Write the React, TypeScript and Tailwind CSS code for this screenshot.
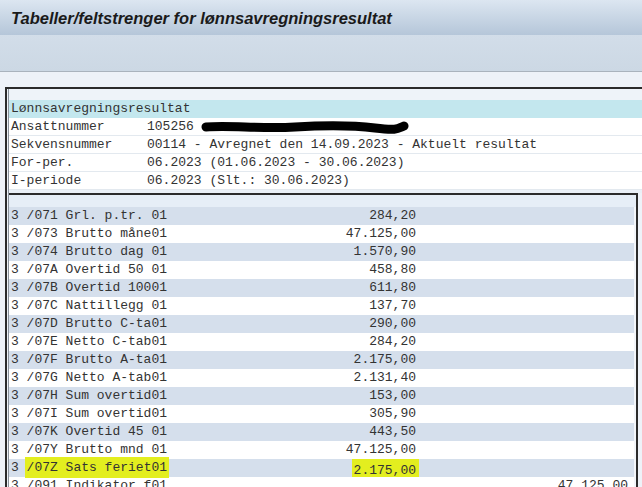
import React from 'react';

type Row = {
  label: string;
  value?: string;
  extra?: string;
  mark?: boolean;
};

const rows: Row[] = [
  { label: '3 /071 Grl. p.tr. 01', value: '284,20' },
  { label: '3 /073 Brutto måne01', value: '47.125,00' },
  { label: '3 /074 Brutto dag 01', value: '1.570,90' },
  { label: '3 /07A Overtid 50 01', value: '458,80' },
  { label: '3 /07B Overtid 10001', value: '611,80' },
  { label: '3 /07C Nattillegg 01', value: '137,70' },
  { label: '3 /07D Brutto C-ta01', value: '290,00' },
  { label: '3 /07E Netto C-tab01', value: '284,20' },
  { label: '3 /07F Brutto A-ta01', value: '2.175,00' },
  { label: '3 /07G Netto A-tab01', value: '2.131,40' },
  { label: '3 /07H Sum overtid01', value: '153,00' },
  { label: '3 /07I Sum overtid01', value: '305,90' },
  { label: '3 /07K Overtid 45 01', value: '443,50' },
  { label: '3 /07Y Brutto mnd 01', value: '47.125,00' },
  { label: '3 /07Z Sats feriet01', value: '2.175,00', mark: true },
  { label: '3 /091 Indikator f01', extra: '47.125,00' },
];

const header = [
  { label: 'Ansattnummer', value: '105256', redacted: true },
  { label: 'Sekvensnummer', value: '00114 - Avregnet den 14.09.2023 - Aktuelt resultat' },
  { label: 'For-per.', value: '06.2023 (01.06.2023 - 30.06.2023)' },
  { label: 'I-periode', value: '06.2023 (Slt.: 30.06.2023)' },
];

function Redacted() {
  return (
    <svg width="212" height="14" viewBox="0 0 212 14" className="ml-[6px] inline-block align-middle">
      <path
        d="M6 7 C 30 5, 60 9, 95 7 S 150 5, 175 8 S 198 8, 204 6"
        stroke="#000"
        strokeWidth="9"
        strokeLinecap="round"
        fill="none"
      />
    </svg>
  );
}

export default function App() {
  return (
    <div
      className="w-[642px] h-[487px] overflow-hidden bg-[#eef2f8] text-[13px] leading-[18px] text-[#333]"
      style={{ fontFamily: '"Liberation Mono", "Courier New", monospace' }}
    >
      <div className="h-[35px] bg-gradient-to-b from-[#dce6f1] to-[#b5c6d9] flex items-center pl-[11px] pt-[1px]">
        <span
          className="text-[16.5px] font-bold italic text-[#1a1a1a] leading-none"
          style={{ fontFamily: '"Liberation Sans", Arial, sans-serif' }}
        >
          Tabeller/feltstrenger for lønnsavregningsresultat
        </span>
      </div>
      <div className="h-[37px] bg-gradient-to-b from-[#d2dde9] to-[#ccd8e4] border-b border-[#aab3bd]" />
      <div className="h-[15px]" />

      <div className="ml-[5px] border-l-2 border-t-2 border-[#2b2b2b]">
        <div className="ml-[1px] border-l border-[#8a929b]">
          {/* header panel */}
          <div className="h-[11px] bg-[#eef3f9]" />
          <div className="h-[18px] bg-[#c3e7ee] pl-[2px]">Lønnsavregningsresultat</div>
          {header.map((h) => (
            <div key={h.label} className="h-[18px] bg-white border-b border-[#e3e9ef] flex pl-[2px] whitespace-pre">
              <span className="w-[136px] shrink-0">{h.label}</span>
              <span className="flex items-center">
                {h.value}
                {h.redacted && <Redacted />}
              </span>
            </div>
          ))}
          <div className="h-[3px] bg-[#eaf0f7]" />

          {/* table */}
          <div className="mr-[4px] border-t-2 border-r-2 border-[#2b2b2b] bg-[#f3f6fa] h-[300px]">
            <div className="h-[12px] bg-[#e6eef7]" />
            {rows.map((r, i) => (
              <div
                key={r.label}
                className={`h-[18px] mr-[2px] flex whitespace-pre pl-[2px] ${
                  i % 2 === 0 ? 'bg-[#d5dfec]' : 'bg-white'
                }`}
              >
                <div className="w-[405px] shrink-0 flex justify-between">
                  {r.mark ? (
                    <span>
                      {r.label.slice(0, 2)}
                      <span className="bg-[#e3ee1f] py-[3px] px-[2px] -mx-[2px]">{r.label.slice(2)}</span>
                    </span>
                  ) : (
                    <span>{r.label}</span>
                  )}
                  {r.value &&
                    (r.mark ? (
                      <span className="bg-[#e3ee1f] py-[3px] pl-[2px] pr-[3px] -ml-[2px] -mr-[3px]">
                        {r.value}
                      </span>
                    ) : (
                      <span>{r.value}</span>
                    ))}
                </div>
                <div className="flex-1 text-right pr-[6px]">{r.extra}</div>
              </div>
            ))}
          </div>
        </div>
      </div>
    </div>
  );
}
